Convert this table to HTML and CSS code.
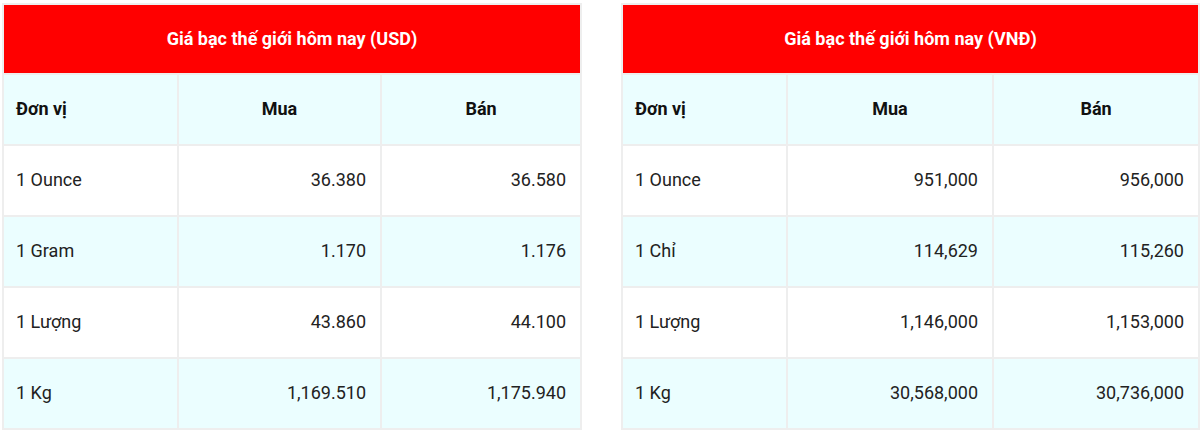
FILE: index.html
```html
<!DOCTYPE html>
<html lang="vi">
<head>
<meta charset="utf-8">
<link rel="stylesheet" href="styles.css">
</head>
<body>
<div class="wrap">
  <table class="price price-usd">
    <colgroup><col class="c1"><col class="c2"><col class="c3"></colgroup>
    <thead>
      <tr><th class="title" colspan="3">Giá bạc thế giới hôm nay (USD)</th></tr>
      <tr class="head"><th class="left">Đơn vị</th><th>Mua</th><th>Bán</th></tr>
    </thead>
    <tbody>
      <tr><td class="left">1 Ounce</td><td>36.380</td><td>36.580</td></tr>
      <tr class="alt"><td class="left">1 Gram</td><td>1.170</td><td>1.176</td></tr>
      <tr><td class="left">1 Lượng</td><td>43.860</td><td>44.100</td></tr>
      <tr class="alt"><td class="left">1 Kg</td><td>1,169.510</td><td>1,175.940</td></tr>
    </tbody>
  </table>
  <table class="price price-vnd">
    <colgroup><col class="c1"><col class="c2"><col class="c3"></colgroup>
    <thead>
      <tr><th class="title" colspan="3">Giá bạc thế giới hôm nay (VNĐ)</th></tr>
      <tr class="head"><th class="left">Đơn vị</th><th>Mua</th><th>Bán</th></tr>
    </thead>
    <tbody>
      <tr><td class="left">1 Ounce</td><td>951,000</td><td>956,000</td></tr>
      <tr class="alt"><td class="left">1 Chỉ</td><td>114,629</td><td>115,260</td></tr>
      <tr><td class="left">1 Lượng</td><td>1,146,000</td><td>1,153,000</td></tr>
      <tr class="alt"><td class="left">1 Kg</td><td>30,568,000</td><td>30,736,000</td></tr>
    </tbody>
  </table>
</div>
</body>
</html>
```
FILE: styles.css
```css
html, body {
  margin: 0;
  padding: 0;
  background: #ffffff;
}
body {
  font-family: Roboto, "Liberation Sans", Arial, sans-serif;
  color: #222222;
}
.wrap {
  display: flex;
  gap: 39px;
  padding: 3px 0 0 2px;
  align-items: flex-start;
}
.price {
  border-collapse: collapse;
  table-layout: fixed;
  font-size: 18px;
}
.price-usd { width: 580px; }
.price-vnd { width: 579px; }
.price-usd .c1 { width: 175px; }
.price-usd .c2 { width: 203px; }
.price-vnd .c1 { width: 165px; }
.price-vnd .c2 { width: 206px; }
.price th, .price td {
  border: 2px solid #eeeeee;
  height: 71px;
  padding: 0 14px 3px 14px;
  box-sizing: border-box;
}
.price th.left, .price td.left { padding-left: 12px; }
.price .title {
  background: #ff0000;
  color: #ffffff;
  font-weight: 700;
  text-align: center;
  height: 70px;
  padding-bottom: 2px;
}
.price .head th {
  background: #ebfeff;
  color: #111111;
  font-weight: 700;
  text-align: center;
}
.price .head th.left { text-align: left; }
.price td {
  text-align: right;
}
.price td.left { text-align: left; }
.price .alt td { background: #ebfeff; }
```
